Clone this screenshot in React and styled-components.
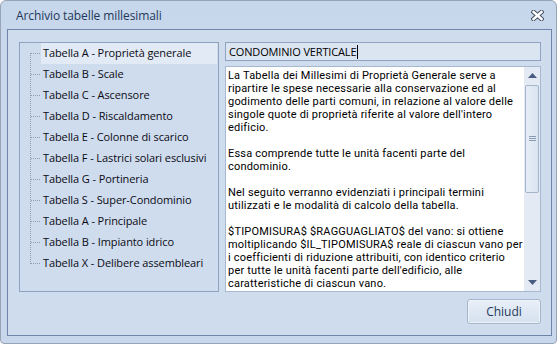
import React from 'react';
import styled, { createGlobalStyle } from 'styled-components';

const GlobalStyle = createGlobalStyle`
  html, body {
    margin: 0;
    padding: 0;
    background: #ffffff;
  }
  body {
    font-family: "Segoe UI", "Open Sans", "Noto Sans", sans-serif;
    font-size: 11px;
  }
`;

const Window = styled.div`
  box-sizing: border-box;
  width: 557px;
  height: 344px;
  border: 1px solid #97a4b6;
  border-radius: 6px 6px 4px 4px;
  background: linear-gradient(180deg, #c6d6eb 0%, #c9d8ec 12%, #c8d7eb 100%);
  padding: 0 4px 7px 6px;
  display: flex;
  flex-direction: column;
`;

const TitleBar = styled.div`
  flex-shrink: 0;
  height: 28px;
  display: flex;
  align-items: center;
  justify-content: space-between;
  padding: 0 8px 0 9px;
`;

const Title = styled.span`
  font-size: 12px;
  color: #1e395b;
  letter-spacing: -0.1px;
`;

const CloseButton = styled.div`
  width: 14px;
  height: 12px;
  display: flex;
  align-items: center;
  justify-content: center;
`;

const Client = styled.div`
  flex: 1;
  min-height: 0;
  border: 1px solid #6f85a8;
  background: #cfdcee;
  display: grid;
  grid-template-columns: 200px minmax(0, 1fr);
  grid-template-rows: minmax(0, 1fr) auto;
  column-gap: 6px;
  row-gap: 7px;
  padding: 12px 10px 11px 11px;
`;

const Tree = styled.div`
  border: 1px solid #8fa3c1;
  background: #cfdcee;
  padding: 0 1px 0 21px;
`;

const TreeList = styled.ul`
  list-style: none;
  margin: 0;
  padding: 0;
  position: relative;

  &::before {
    content: '';
    position: absolute;
    left: -11px;
    top: 10px;
    bottom: 10px;
    border-left: 1px dotted #8d9db8;
  }
`;

const TreeItem = styled.li`
  position: relative;
  height: 21px;
  line-height: 20px;
  padding-left: 2px;
  color: #0b0b14;
  white-space: nowrap;
  background: ${p => (p.$selected ? '#e2eaf6' : 'transparent')};
  letter-spacing: -0.1px;

  &::before {
    content: '';
    position: absolute;
    left: -10px;
    top: 10px;
    width: 9px;
    border-top: 1px dotted #8d9db8;
  }
`;

const RightColumn = styled.div`
  display: flex;
  flex-direction: column;
  gap: 5px;
  min-height: 0;
`;

const NameInput = styled.div`
  flex-shrink: 0;
  height: 19px;
  box-sizing: border-box;
  border: 1px solid #8fa3c1;
  background: #dbe5f2;
  padding: 0 3px;
  line-height: 17px;
  font-size: 11px;
  color: #000;
  display: flex;
  align-items: center;
  letter-spacing: -0.15px;
`;

const Caret = styled.span`
  display: inline-block;
  width: 1px;
  height: 14px;
  background: #000;
  margin-left: 1px;
`;

const Memo = styled.div`
  flex: 1;
  min-height: 0;
  border: 1px solid #a7b8d1;
  background: #ffffff;
  display: flex;
`;

const MemoText = styled.div`
  flex: 1;
  min-height: 0;
  padding: 2px 0 0 2px;
  font-family: Roboto, "Open Sans", sans-serif;
  font-size: 11px;
  line-height: 13px;
  color: #000;
  overflow: hidden;
  letter-spacing: 0.2px;
`;

const Paragraph = styled.p`
  margin: 0 0 13px;
  white-space: nowrap;
`;

const ScrollBar = styled.div`
  width: 16px;
  background: #e4eaf3;
  display: flex;
  flex-direction: column;
  align-items: center;
`;

const Arrow = styled.div`
  height: 17px;
  width: 100%;
  display: flex;
  align-items: center;
  justify-content: center;
`;

const Thumb = styled.div`
  box-sizing: border-box;
  width: 14px;
  height: 108px;
  margin-top: 1px;
  border: 1px solid #a5b6cc;
  border-radius: 2px;
  background: linear-gradient(90deg, #e6edf6 0%, #d9e3f0 100%);
  display: flex;
  align-items: center;
  justify-content: center;
`;

const Track = styled.div`
  flex: 1;
`;

const Footer = styled.div`
  grid-column: 1 / span 2;
  display: flex;
  justify-content: flex-end;
`;

const Button = styled.button`
  width: 74px;
  height: 25px;
  border: 1px solid #a5b5cc;
  border-radius: 3px;
  background: linear-gradient(180deg, #e9f0f8 0%, #dfe8f3 50%, #d6e1ef 100%);
  font-family: inherit;
  font-size: 12px;
  color: #1e395b;
  padding: 0;
  box-shadow: inset 0 0 0 1px #eef3f9;
`;

const items = [
  'Tabella A - Proprietà generale',
  'Tabella B - Scale',
  'Tabella C - Ascensore',
  'Tabella D - Riscaldamento',
  'Tabella E - Colonne di scarico',
  'Tabella F - Lastrici solari esclusivi',
  'Tabella G - Portineria',
  'Tabella S - Super-Condominio',
  'Tabella A - Principale',
  'Tabella B - Impianto idrico',
  'Tabella X - Delibere assembleari',
];

// each paragraph is kept with the same line breaks as the original memo
const paragraphs = [
  [
    'La Tabella dei Millesimi di Proprietà Generale serve a',
    'ripartire le spese necessarie alla conservazione ed al',
    'godimento delle parti comuni, in relazione al valore delle',
    "singole quote di proprietà riferite al valore dell'intero",
    'edificio.',
  ],
  ['Essa comprende tutte le unità facenti parte del', 'condominio.'],
  ['Nel seguito verranno evidenziati i principali termini', 'utilizzati e le modalità di calcolo della tabella.'],
  [
    '$TIPOMISURA$ $RAGGUAGLIATO$ del vano: si ottiene',
    'moltiplicando $IL_TIPOMISURA$ reale di ciascun vano per',
    'i coefficienti di riduzione attribuiti, con identico criterio',
    "per tutte le unità facenti parte dell'edificio, alle",
    'caratteristiche di ciascun vano.',
  ],
];

const CloseIcon = () => (
  <svg width="13" height="11" viewBox="0 0 13 11">
    <path d="M2.5 2 L10.5 9 M10.5 2 L2.5 9" stroke="#4b5668" strokeWidth="4.5" strokeLinecap="square" />
    <path d="M2.5 2 L10.5 9 M10.5 2 L2.5 9" stroke="#ffffff" strokeWidth="2.4" strokeLinecap="square" />
  </svg>
);

const App = () => {
  return (
    <React.Fragment>
      <GlobalStyle />
      <Window>
        <TitleBar>
          <Title>Archivio tabelle millesimali</Title>
          <CloseButton>
            <CloseIcon />
          </CloseButton>
        </TitleBar>
        <Client>
          <Tree>
            <TreeList>
              {items.map((label, i) => (
                <TreeItem key={i} $selected={i === 0}>{label}</TreeItem>
              ))}
            </TreeList>
          </Tree>
          <RightColumn>
            <NameInput>
              CONDOMINIO VERTICALE<Caret />
            </NameInput>
            <Memo>
              <MemoText>
                {paragraphs.map((p, i) => (
                  <Paragraph key={i}>
                    {p.map((l, j) => (
                      <React.Fragment key={j}>
                        {j > 0 && <br />}
                        {l}
                      </React.Fragment>
                    ))}
                  </Paragraph>
                ))}
              </MemoText>
              <ScrollBar>
                <Arrow>
                  <svg width="9" height="5" viewBox="0 0 9 5">
                    <path d="M0 5 L4.5 0 L9 5 Z" fill="#4a5d80" />
                  </svg>
                </Arrow>
                <Thumb>
                  <svg width="7" height="6" viewBox="0 0 7 6">
                    <path d="M0 0.5 H7 M0 2.5 H7 M0 4.5 H7" stroke="#8a9bb4" strokeWidth="1" />
                  </svg>
                </Thumb>
                <Track />
                <Arrow>
                  <svg width="9" height="5" viewBox="0 0 9 5">
                    <path d="M0 0 L9 0 L4.5 5 Z" fill="#4a5d80" />
                  </svg>
                </Arrow>
              </ScrollBar>
            </Memo>
          </RightColumn>
          <Footer>
            <Button>Chiudi</Button>
          </Footer>
        </Client>
      </Window>
    </React.Fragment>
  );
};

export default App;
